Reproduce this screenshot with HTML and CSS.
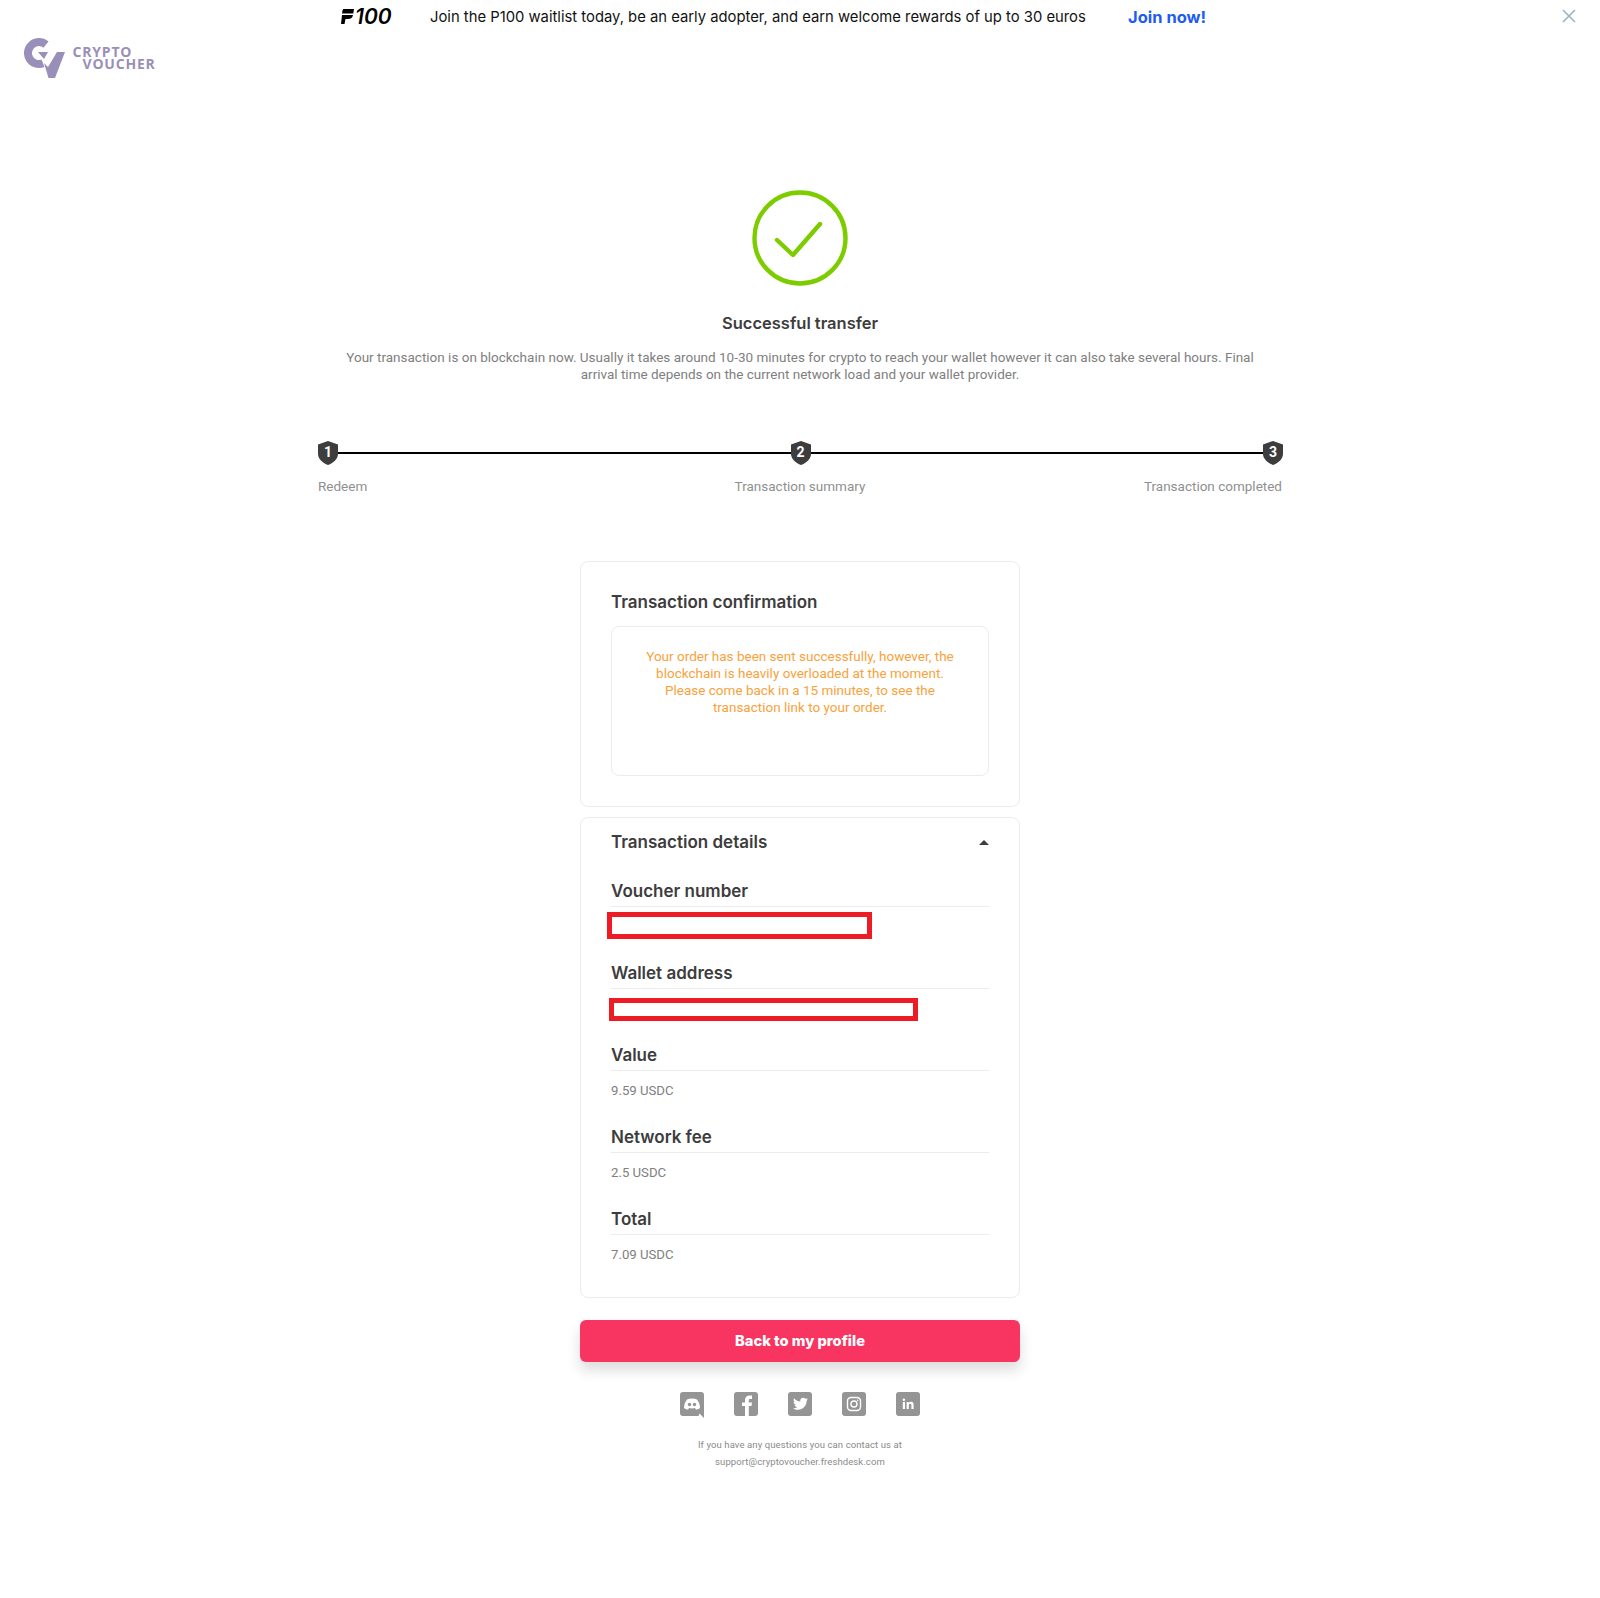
FILE: index.html
```html
<!DOCTYPE html>
<html lang="en">
<head>
  <meta charset="UTF-8" />
  <meta name="viewport" content="width=device-width, initial-scale=1" />
  <title>Crypto Voucher - Successful transfer</title>
  <link rel="stylesheet" href="styles.css">
</head>
<body>
  <!-- Top banner -->
  <div class="banner">
    <div class="banner-brand">
      <svg class="banner-mark" viewBox="0 0 13 15"><path d="M3 0H13L12.300 4.500H1L1.500 1.500C1.700 0.500 2.200 0 3 0ZM1 6H12C11.600 8.500 10 10 7 10H4.500L3.500 15H0Z" fill="#000"/></svg>
      <span class="banner-num">100</span>
    </div>
    <span class="banner-text">Join the P100 waitlist today, be an early adopter, and earn welcome rewards of up to 30 euros</span>
    <a class="banner-link">Join now!</a>
    <svg class="banner-close" viewBox="0 0 14 14"><path d="M1 1L13 13M13 1L1 13" stroke="#9fb3bd" stroke-width="1.600" fill="none"/></svg>
  </div>

  <!-- Logo -->
  <div class="logo">
    <svg class="logo-mark" viewBox="0 0 42 40"><path d="M22 6.600A11 11 0 1 0 19 25.300" stroke="#9a8fb8" stroke-width="8" fill="none"/><path d="M14 14H24L20 21ZM24 29L33 14H41L31 40H24.500L20 25Z" fill="#9a8fb8"/></svg>
    <div class="logo-text">
      <span>CRYPTO</span>
      <span class="logo-second">VOUCHER</span>
    </div>
  </div>

  <main class="main">
    <!-- Success message -->
    <svg class="success-icon" viewBox="0 0 96 96">
      <circle cx="48" cy="48" r="45.500" stroke="#7ccc00" stroke-width="4.400" fill="none"/>
      <path d="M25 50L41 65L68 34" stroke="#7ccc00" stroke-width="4.400" stroke-linecap="round" stroke-linejoin="round" fill="none"/>
    </svg>
    <h1 class="success-title">Successful transfer</h1>
    <p class="success-text">Your transaction is on blockchain now. Usually it takes around 10-30 minutes for crypto to reach your wallet however it can also take several hours. Final arrival time depends on the current network load and your wallet provider.</p>

    <!-- Steps -->
    <div class="steps">
      <div class="step-track">
        <div class="shield"><svg viewBox="0 0 20 24"><path d="M10 0L20 3.500V13C20 18 15 22 10 24C5 22 0 18 0 13V3.500Z" fill="#3d3d3d"/></svg><span>1</span></div>
        <div class="step-line"></div>
        <div class="shield"><svg viewBox="0 0 20 24"><path d="M10 0L20 3.500V13C20 18 15 22 10 24C5 22 0 18 0 13V3.500Z" fill="#3d3d3d"/></svg><span>2</span></div>
        <div class="step-line"></div>
        <div class="shield"><svg viewBox="0 0 20 24"><path d="M10 0L20 3.500V13C20 18 15 22 10 24C5 22 0 18 0 13V3.500Z" fill="#3d3d3d"/></svg><span>3</span></div>
      </div>
      <div class="step-labels">
        <span>Redeem</span>
        <span>Transaction summary</span>
        <span class="step-last">Transaction completed</span>
      </div>
    </div>

    <!-- Confirmation card -->
    <section class="card card-confirm">
      <h2>Transaction confirmation</h2>
      <div class="notice">Your order has been sent successfully, however, the blockchain is heavily overloaded at the moment. Please come back in a 15 minutes, to see the transaction link to your order.</div>
    </section>

    <!-- Details card -->
    <section class="card card-details">
      <div class="details-head">
        <h2>Transaction details</h2>
        <span class="caret"></span>
      </div>
      <div class="field">
        <h3>Voucher number</h3>
        <div class="redact redact-voucher"></div>
      </div>
      <div class="field">
        <h3>Wallet address</h3>
        <div class="redact redact-wallet"></div>
      </div>
      <div class="field">
        <h3>Value</h3>
        <p>9.59 USDC</p>
      </div>
      <div class="field">
        <h3>Network fee</h3>
        <p>2.5 USDC</p>
      </div>
      <div class="field">
        <h3>Total</h3>
        <p>7.09 USDC</p>
      </div>
    </section>

    <button class="back-btn">Back to my profile</button>

    <!-- Social icons -->
    <div class="social">
      <svg viewBox="0 0 24 26"><path d="M3 0H21A3 3 0 0 1 24 3V26L19.500 21.500L18.500 24H3A3 3 0 0 1 0 21V3A3 3 0 0 1 3 0Z" fill="#959595"/><path d="M7 7.500C10 6.200 14 6.200 17 7.500C19 10 20 13 20 16C18.500 17.300 17 17.500 15.800 17.500L15 16C13 16.500 11 16.500 9 16L8.200 17.500C7 17.500 5.500 17.300 4 16C4 13 5 10 7 7.500Z" fill="#fff"/><circle cx="9.500" cy="12.500" r="1.700" fill="#959595"/><circle cx="14.500" cy="12.500" r="1.700" fill="#959595"/></svg>
      <svg viewBox="0 0 24 24"><rect width="24" height="24" rx="3" fill="#959595"/><path d="M11 24V14H8V10.500H11V8C11 5 12.800 3.500 15.500 3.500H18V7H16C15 7 14.800 7.500 14.800 8.300V10.500H18L17.500 14H14.800V24Z" fill="#fff"/></svg>
      <svg viewBox="0 0 24 24"><rect width="24" height="24" rx="3" fill="#959595"/><path d="M20 7.200C19.400 7.500 18.800 7.700 18.200 7.700C18.800 7.300 19.300 6.700 19.500 6C18.900 6.400 18.200 6.600 17.500 6.800C16.900 6.200 16.100 5.800 15.200 5.800C13.300 5.800 11.900 7.500 12.300 9.400C9.800 9.300 7.500 8.100 6 6.200C5.200 7.600 5.600 9.400 7 10.300C6.500 10.300 6 10.100 5.600 9.900C5.600 11.300 6.600 12.600 8.100 12.900C7.600 13 7.100 13.100 6.600 13C7 14.200 8.100 15 9.400 15.100C8.100 16.100 6.500 16.500 5 16.400C6.400 17.300 8 17.800 9.700 17.800C15.500 17.800 18.800 13 18.600 8.800C19.200 8.400 19.700 7.800 20 7.200Z" fill="#fff"/></svg>
      <svg viewBox="0 0 24 24"><rect width="24" height="24" rx="3" fill="#959595"/><rect x="5.500" y="5.500" width="13" height="13" rx="3.500" stroke="#fff" stroke-width="1.400" fill="none"/><circle cx="12" cy="12" r="3" stroke="#fff" stroke-width="1.400" fill="none"/><circle cx="15.700" cy="8.300" r="0.800" fill="#fff"/></svg>
      <svg viewBox="0 0 24 24"><rect width="24" height="24" rx="3" fill="#959595"/><path d="M6.800 10H9V17H6.800ZM6.600 7.800A1.300 1.300 0 1 1 9.200 7.800A1.300 1.300 0 1 1 6.600 7.800ZM10.600 10H12.700V11C13.200 10.200 14 9.800 15 9.800C16.800 9.800 17.600 11 17.600 13V17H15.400V13.400C15.400 12.400 15 11.800 14.200 11.800C13.400 11.800 12.800 12.400 12.800 13.400V17H10.600Z" fill="#fff"/></svg>
    </div>

    <div class="contact">
      <p>If you have any questions you can contact us at</p>
      <p>support@cryptovoucher.freshdesk.com</p>
    </div>
  </main>
</body>
</html>
```

FILE: styles.css
```css
* {
  box-sizing: border-box;
}

body {
  margin: 0;
  height: 1598px;
  background: #fff;
  font-family: 'Roboto', sans-serif;
  color: #3d3d3d;
}

.banner {
  position: relative;
  height: 33px;
  display: flex;
  align-items: center;
  padding-left: 341px;
}

.banner-brand {
  display: flex;
  align-items: center;
  gap: 1px;
  width: 89px;
}

.banner-mark {
  width: 13px;
  height: 15px;
}

.banner-num {
  font-family: 'Inter', sans-serif;
  font-style: italic;
  font-weight: 600;
  font-size: 21px;
  color: #000;
}

.banner-text {
  font-family: 'Inter', sans-serif;
  font-size: 14.800px;
  color: #111;
  width: 698px;
  white-space: nowrap;
}

.banner-link {
  font-family: 'Inter', sans-serif;
  font-weight: 700;
  font-size: 16.500px;
  color: #1f5cf0;
}

.banner-close {
  position: absolute;
  top: 9px;
  right: 24px;
  width: 14px;
  height: 14px;
}

.logo {
  height: 40px;
  margin: 5px 0 0 24px;
  display: flex;
  align-items: flex-start;
}

.logo-mark {
  width: 42px;
  height: 40px;
}

.logo-text {
  margin: 8px 0 0 6.500px;
  display: flex;
  flex-direction: column;
  font-family: 'Open Sans', sans-serif;
  font-weight: 700;
  font-size: 14px;
  line-height: 12px;
  letter-spacing: 0.8px;
  color: #9a8fb8;
}

.logo-second {
  margin-left: 10px;
}

.main {
  width: 964px;
  margin: 0 auto;
  padding-top: 112px;
  display: flex;
  flex-direction: column;
  align-items: center;
}

.success-icon {
  width: 96px;
  height: 96px;
}

.success-title {
  margin: 27px 0 0;
  font-family: 'Inter', sans-serif;
  font-size: 16.500px;
  line-height: 20px;
  font-weight: 600;
  color: #3d3d3d;
}

.success-text {
  width: 920px;
  margin: 16px 0 0;
  font-size: 13.500px;
  line-height: 17px;
  text-align: center;
  color: #808080;
}

.steps {
  width: 100%;
  margin-top: 58px;
}

.step-track {
  display: flex;
  align-items: center;
  margin-right: -1px;
}

.step-line {
  flex: 1;
  height: 2px;
  background: #000;
}

.shield {
  position: relative;
  width: 20px;
  height: 24px;
}

.shield svg {
  display: block;
  width: 20px;
  height: 24px;
}

.shield span {
  position: absolute;
  inset: 0;
  text-align: center;
  font-size: 14px;
  font-weight: 700;
  line-height: 23px;
  color: #fff;
}

.step-labels {
  display: grid;
  grid-template-columns: 1fr auto 1fr;
  margin-top: 13px;
  font-size: 13.500px;
  line-height: 17px;
  color: #909090;
}

.step-last {
  text-align: right;
}

.card {
  width: 440px;
  border: 1px solid #ececec;
  border-radius: 8px;
  padding: 0 30px;
}

.card h2 {
  margin: 0;
  font-family: 'Inter', sans-serif;
  font-size: 17px;
  line-height: 22px;
  font-weight: 600;
  color: #3d3d3d;
}

.card-confirm {
  height: 246px;
  margin-top: 66px;
  padding-top: 29px;
}

.notice {
  height: 150px;
  margin-top: 13px;
  padding: 21px 30px 0;
  border: 1px solid #ececec;
  border-radius: 8px;
  font-size: 13.500px;
  line-height: 17px;
  text-align: center;
  color: #f9a23b;
}

.card-details {
  height: 481px;
  margin-top: 10px;
  padding-top: 13px;
}

.details-head {
  display: flex;
  justify-content: space-between;
  align-items: center;
  margin-bottom: 27px;
}

.caret {
  width: 0;
  height: 0;
  border-left: 5px solid transparent;
  border-right: 5px solid transparent;
  border-bottom: 5px solid #3d3d3d;
}

.field {
  height: 82px;
}

.field h3 {
  margin: 0;
  padding-bottom: 4px;
  border-bottom: 1px solid #ececec;
  font-family: 'Inter', sans-serif;
  font-size: 17px;
  line-height: 22px;
  font-weight: 600;
  color: #3d3d3d;
}

.field p {
  margin: 11px 0 0;
  font-size: 13.200px;
  line-height: 17px;
  color: #808080;
}

.redact {
  border: 5px solid #ed1c24;
  background: #fff;
}

.redact-voucher {
  width: 265px;
  height: 27px;
  margin: 5px 0 0 -4px;
}

.redact-wallet {
  width: 309px;
  height: 23px;
  margin: 9px 0 0 -2px;
}

.back-btn {
  width: 440px;
  height: 42px;
  margin-top: 22px;
  border: none;
  border-radius: 6px;
  background: #f83460;
  box-shadow: 0 8px 14px rgba(0, 0, 0, 0.14);
  font-family: 'Inter', sans-serif;
  font-size: 14.700px;
  font-weight: 800;
  color: #fff;
}

.social {
  display: flex;
  align-items: flex-start;
  gap: 30px;
  margin-top: 30px;
}

.social svg {
  display: block;
  width: 24px;
  height: 24px;
}

.social svg:first-child {
  height: 26px;
}

.contact {
  margin-top: 18px;
  text-align: center;
  font-size: 9.500px;
  line-height: 17px;
  letter-spacing: 0.1px;
  color: #8a8a8a;
}

.contact p {
  margin: 0;
}
```
